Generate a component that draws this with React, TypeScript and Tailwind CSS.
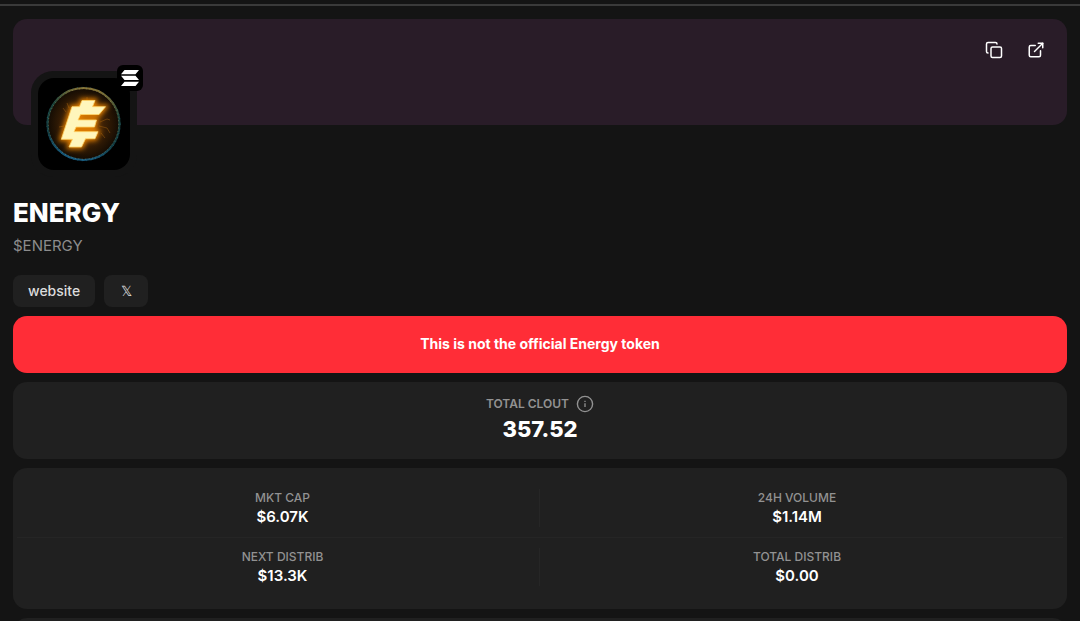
import type { ReactNode } from "react";
import { Copy, ExternalLink } from "lucide-react";

const statRows = [
  [
    { label: "MKT CAP", value: "$6.07K" },
    { label: "24H VOLUME", value: "$1.14M" },
  ],
  [
    { label: "NEXT DISTRIB", value: "$13.3K" },
    { label: "TOTAL DISTRIB", value: "$0.00" },
  ],
];

function Card({ className = "", children }: { className?: string; children?: ReactNode }) {
  return <section className={`rounded-[14px] bg-[#202020] ${className}`}>{children}</section>;
}

function TokenLogo() {
  return (
    <svg viewBox="0 0 92 92" className="block size-full" role="img" aria-label="Energy token">
      <defs>
        <radialGradient id="core">
          <stop offset="0" stopColor="#7a4205" />
          <stop offset="0.55" stopColor="#3d2105" />
          <stop offset="1" stopColor="#130b03" />
        </radialGradient>
        <linearGradient id="ring" x1="0.6" y1="0" x2="0.4" y2="1">
          <stop offset="0" stopColor="#8a7435" />
          <stop offset="0.3" stopColor="#1d4238" />
          <stop offset="0.7" stopColor="#123a40" />
          <stop offset="1" stopColor="#175a80" />
        </linearGradient>
        <filter id="glow" x="-50%" y="-50%" width="200%" height="200%">
          <feGaussianBlur stdDeviation="2.4" />
        </filter>
        <path
          id="mark"
          d="M44 22.5h13l-2.5 6.2h13L61 36.5H42.5L40 42h18.5l-2 7H38l-2 4.7h24l-3 7h-9.5L43.5 69H31l3.5-7.7H23.3L34 28.7h7.5z"
        />
      </defs>
      <rect width="92" height="92" fill="#000" />
      <circle cx="45.5" cy="46" r="36" fill="url(#core)" />
      <circle cx="45.5" cy="46" r="36" fill="none" stroke="url(#ring)" strokeWidth="2.2" />
      <circle cx="45.5" cy="46" r="35.2" fill="none" stroke="#c7b76d" strokeWidth="0.6" strokeDasharray="1 2.5" opacity="0.6" />
      <circle cx="45.5" cy="46" r="36.8" fill="none" stroke="#3390a8" strokeWidth="0.7" strokeDasharray="1 3.5" opacity="0.55" />
      <path
        d="M62 44l7-3 3 1M61 48l8 2 3 5M63 55l4 5M28 34l-3-4M31 30l-2-5M49 22v-3M26 48l-5 1"
        fill="none"
        stroke="#a3600f"
        strokeWidth="0.6"
        opacity="0.8"
      />
      <use href="#mark" fill="#e88200" stroke="#e88200" strokeWidth="4" filter="url(#glow)" />
      <use href="#mark" fill="#fff6bc" stroke="#ffd66b" strokeWidth="0.8" />
    </svg>
  );
}

function ChainBadge() {
  return (
    <span className="absolute -top-1.5 -right-1.5 flex size-[26px] items-center justify-center rounded-md bg-black">
      <svg viewBox="0 0 18 16" className="h-4 w-[18px]" fill="#fff" aria-hidden="true">
        <path d="M3.5 0H18l-3.5 4.3H0zM0 5.8h14.5L18 10.1H3.5zM3.5 11.7H18L14.5 16H0z" />
      </svg>
    </span>
  );
}

function InfoIcon() {
  return (
    <svg viewBox="0 0 18 18" className="size-[18px]" fill="none" stroke="currentColor" aria-hidden="true">
      <circle cx="9" cy="9" r="7.6" strokeWidth="1.4" />
      <path d="M9 8.3v3.8M9 5.7v1.2" strokeWidth="1.3" />
    </svg>
  );
}

export default function App() {
  return (
    <div className="h-screen overflow-hidden bg-[#141414] pt-1 font-['Inter',sans-serif] text-white">
      <div className="h-0.5 bg-[#3a3a3a]" />

      <main className="px-[13px] pt-[13px]">
        <header className="relative h-[106px] rounded-[14px] bg-[#291c28]">
          <div className="flex justify-end gap-6 pt-[22px] pr-[22px]">
            <button type="button" aria-label="Copy address">
              <Copy className="size-[18px]" strokeWidth={2} />
            </button>
            <a href="#explorer" aria-label="Open in explorer">
              <ExternalLink className="size-[18px]" strokeWidth={2} />
            </a>
          </div>
          <div className="absolute top-[52px] left-[18px] size-[106px] rounded-[22px] bg-[#141414] p-[7px]">
            <div className="size-full overflow-hidden rounded-2xl">
              <TokenLogo />
            </div>
            <ChainBadge />
          </div>
        </header>

        <h1 className="mt-[72px] text-[26px] leading-8 font-extrabold">ENERGY</h1>
        <p className="mt-[7px] text-[15px] leading-5 text-[#8c8c8c]">$ENERGY</p>

        <nav className="mt-[19px] flex gap-[9px] text-sm font-medium text-[#dcdcdc]">
          <a href="#website" className="flex h-8 items-center rounded-lg bg-[#202020] px-[15px]">
            website
          </a>
          <a href="#x" className="flex h-8 min-w-11 items-center justify-center rounded-lg bg-[#202020] px-4">
            𝕏
          </a>
        </nav>

        <div className="mt-[9px] space-y-[9px]">
          <p className="rounded-[14px] bg-[#ff2d37] pt-[18px] pb-[19px] text-center text-sm leading-5 font-bold">
            This is not the official Energy token
          </p>

          <Card className="flex flex-col items-center pt-[13px] pb-4">
            <h2 className="flex items-center gap-[7px] text-xs leading-[18px] font-semibold text-[#929292]">
              TOTAL CLOUT
              <InfoIcon />
            </h2>
            <p className="mt-0.5 text-[22px] leading-7 font-extrabold">357.52</p>
          </Card>

          <Card className="px-1 pt-[11px] pb-[13px]">
            {statRows.map((row, i) => (
              <dl
                key={i}
                className="grid grid-cols-2 border-[#252525] px-[9px] py-2.5 not-last:border-b"
              >
                {row.map(({ label, value }) => (
                  <div key={label} className="border-[#262626] text-center not-last:border-r">
                    <dt className="text-xs leading-[18px] font-medium text-[#929292]">{label}</dt>
                    <dd className="text-[15px] leading-5 font-semibold">{value}</dd>
                  </div>
                ))}
              </dl>
            ))}
          </Card>

          <Card className="h-20" />
        </div>
      </main>
    </div>
  );
}
